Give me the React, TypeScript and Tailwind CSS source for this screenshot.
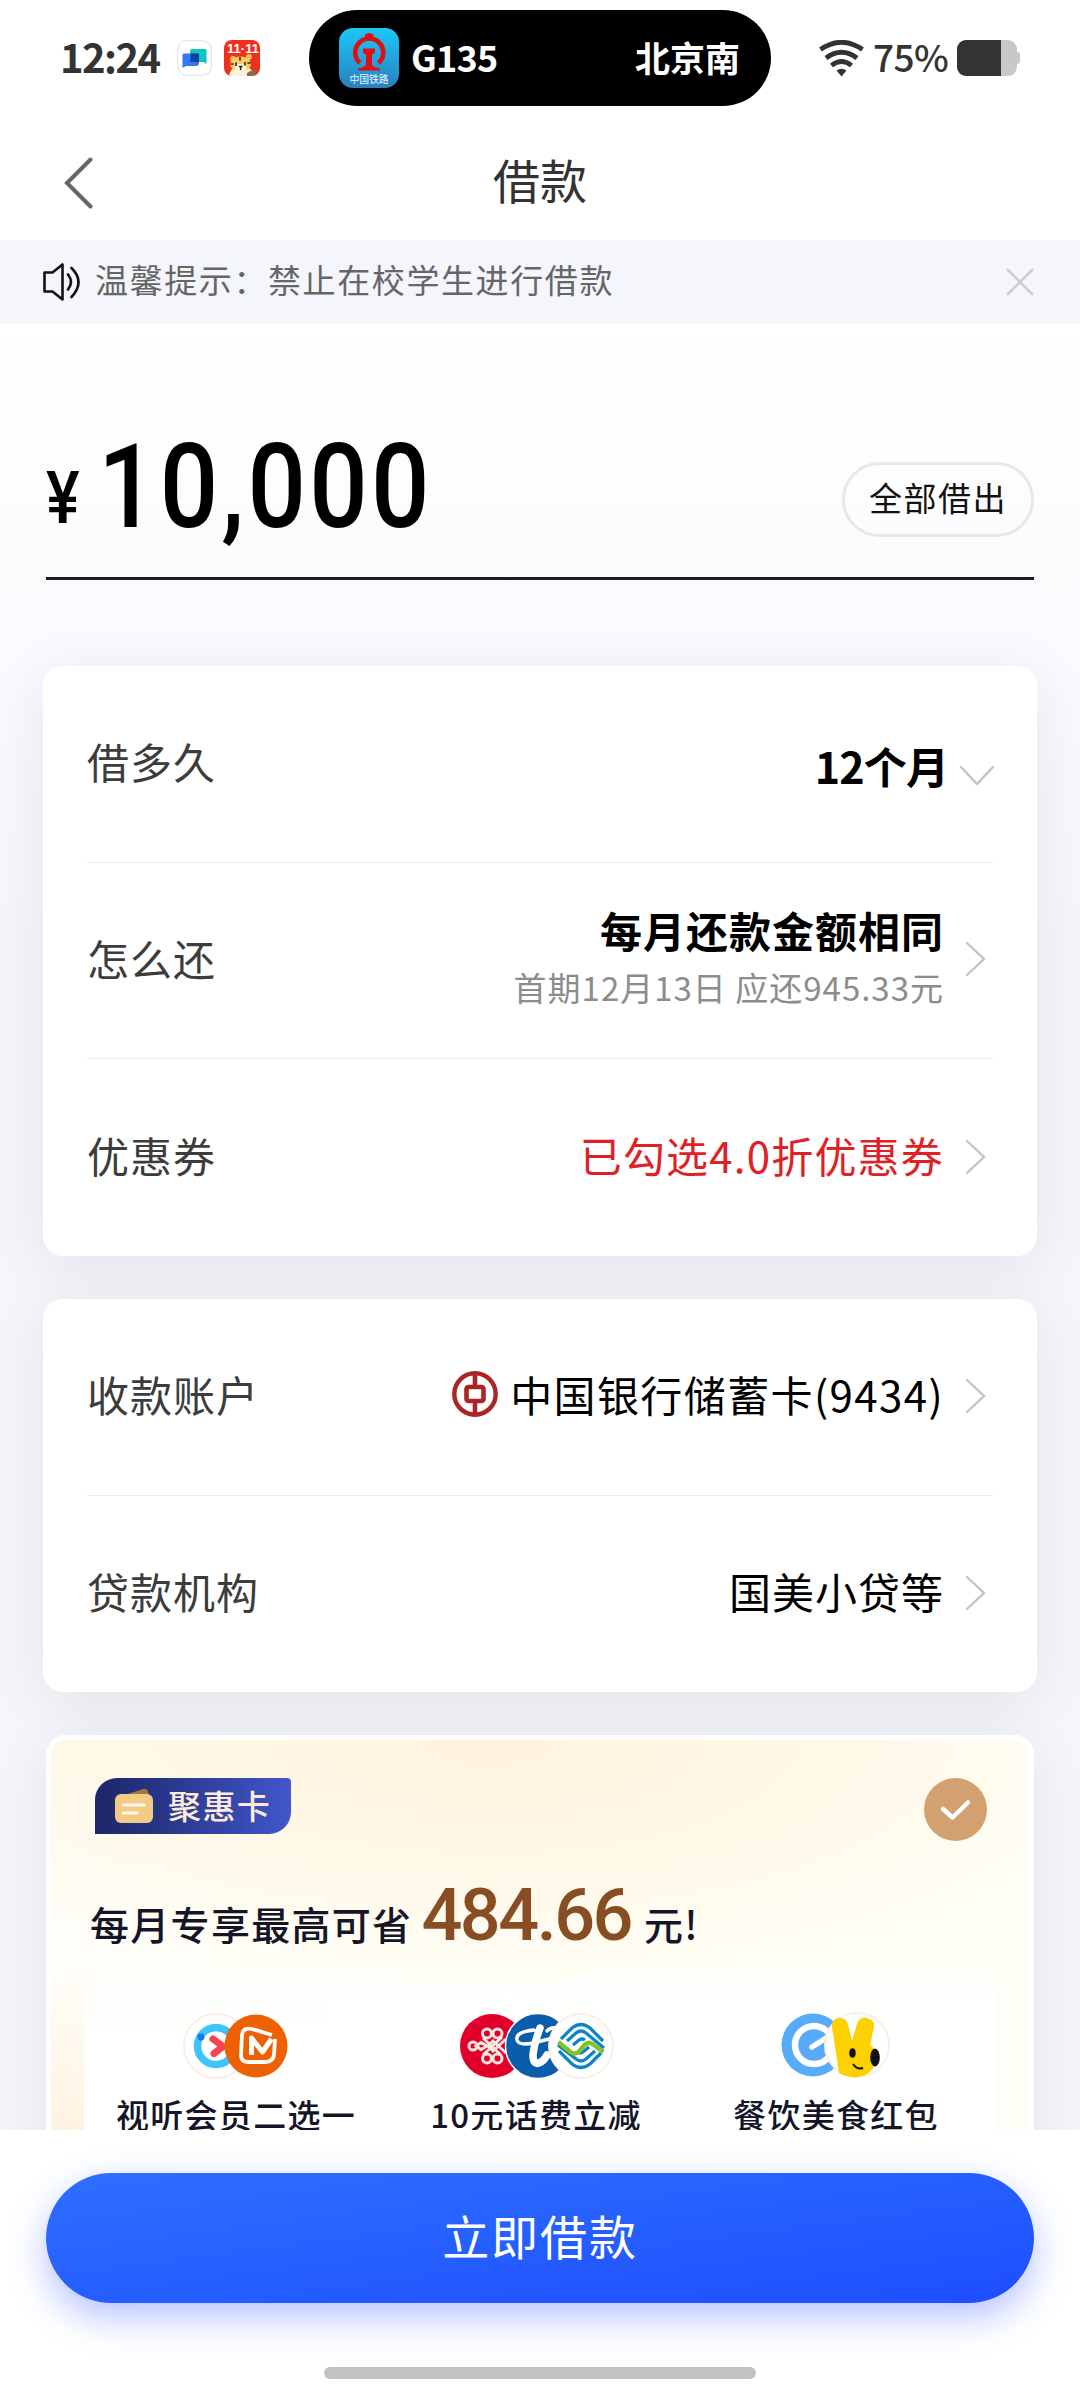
import React from "react";

type RowProps = {
  label: string;
  last?: boolean;
  children: React.ReactNode;
};

const Chevron = () => (
  <svg className="ml-[21px] mr-px h-[36px] w-[22px] shrink-0" viewBox="0 0 22 36" fill="none" aria-hidden>
    <path d="M2 2L19 18L2 34" stroke="#c4c4c4" strokeWidth="2.4" strokeLinecap="round" />
  </svg>
);

const Row = ({ label, last, children }: RowProps) => (
  <div
    className={`flex h-[196.67px] items-center justify-between pr-[5px] ${
      last ? "" : "border-b-[1.5px] border-[#ececee]"
    }`}
  >
    <span className="pb-[5px] text-[42px] leading-none tracking-[1px] text-[#3c3c3c]">{label}</span>
    <div className="flex items-center pb-[2px]">{children}</div>
  </div>
);

const StatusBar = () => (
  <div className="relative flex h-[116px] items-center pl-[60px] text-[#333]">
    <span className="w-[117px] whitespace-nowrap pb-[4px] text-[40px] font-bold leading-none tracking-[-1.6px]">12:24</span>
    <div className="flex gap-3">
      <svg className="h-[36px] w-[35px]" viewBox="0 0 35 36" aria-hidden>
        <rect x=".7" y=".7" width="33.6" height="34.6" rx="9" fill="#fff" stroke="#e3e6e8" strokeWidth="1.2" />
        <path d="M15 9h13.5q1 0 1 1v14l-3-2H13V11q0-2 2-2z" fill="#10c4c0" />
        <path d="M6.5 13.5H22V23q0 3-3 3H9l-3.500 2V14.500z" fill="#2f7bf5" />
        <path d="M13.5 13.5H22V22h-8.500z" fill="#0a42a6" />
      </svg>
      <svg className="h-[36px] w-[36px]" viewBox="0 0 36 36" aria-hidden>
        <defs>
          <clipPath id="tiger"><rect width="36" height="36" rx="8" /></clipPath>
        </defs>
        <g clipPath="url(#tiger)">
          <rect width="36" height="36" fill="#f0301e" />
          <path d="M5 36q1-8 8-9h10q6 2 7 9z" fill="#fff2d8" />
          <circle cx="9" cy="19" r="3" fill="#f3c050" />
          <circle cx="25" cy="17" r="3" fill="#f3c050" />
          <ellipse cx="16.5" cy="24" rx="10.500" ry="7.500" fill="#f8ce62" />
          <ellipse cx="16.5" cy="28" rx="6" ry="4" fill="#fff6e2" />
          <path d="M12 23v2.500M21 22.500v2.500M15.500 26.500h2.500M16 17.500v2.500M7 24h2M24 23h2M16.700 27.500v2" stroke="#3a2316" strokeWidth="1.600" strokeLinecap="round" />
          <path d="M23 33q5-4 10-2l-3 5h-7z" fill="#8a6a48" />
          <text x="19" y="13" textAnchor="middle" fontSize="13" fontWeight="700" fill="#fff" fontFamily="Liberation Sans, sans-serif">11·11</text>
        </g>
      </svg>
    </div>
    <div className="absolute left-[309px] top-[10px] flex h-[96px] w-[462px] items-center rounded-full bg-black pl-[30px] pr-[31px] text-white">
      <svg className="h-[60px] w-[60px]" viewBox="0 0 60 60" aria-hidden>
        <defs>
          <linearGradient id="rail" x1="0" y1="0" x2="0" y2="1">
            <stop offset="0" stopColor="#1cc8f8" />
            <stop offset="1" stopColor="#2b80bd" />
          </linearGradient>
        </defs>
        <rect width="60" height="60" rx="14" fill="url(#rail)" />
        <path d="M21 35A14 14 0 1 1 39.500 35" fill="none" stroke="#dd1014" strokeWidth="4.600" />
        <path d="M26 6.500q4-3 8.500 0v3H26zM24 20.500h12v4.500l-3 1.500v10q0 2.500 8 4v2H19v-2q8-1.500 8-4v-10L24 25z" fill="#dd1014" />
        <text x="30" y="54.500" textAnchor="middle" fontSize="9.800" fill="#e8f6ff" fontFamily="Noto Sans CJK SC, sans-serif">中国铁路</text>
      </svg>
      <span className="ml-[12px] pb-[4px] text-[36px] font-bold leading-none tracking-[-0.8px]">G135</span>
      <span className="ml-auto pb-[4px] text-[35px] font-bold leading-none">北京南</span>
    </div>
    <div className="ml-auto mr-[60px] flex items-center">
      <svg className="h-[37px] w-[45px]" viewBox="0 0 45 37" fill="none" aria-hidden>
        <path d="M1.500 9.500Q22.500-5 43.500 9.500M7 18Q22.500 6.500 38 18M12.500 25.500Q22.500 17.500 32.500 25.500" stroke="#333" strokeWidth="4.800" />
        <path d="M17.500 30.500q5-3.500 10 0l-5 6z" fill="#333" />
      </svg>
      <span className="ml-[9px] w-[84px] whitespace-nowrap pb-[4px] text-[37px] font-medium leading-none tracking-[-0.6px]">75%</span>
      <div className="flex items-center">
        <div className="flex h-[36px] w-[60px] overflow-hidden rounded-[9px] bg-[#c8c8c8]">
          <div className="w-[44px] bg-[#333]" />
        </div>
        <div className="h-[12px] w-[3px] rounded-r bg-[#c8c8c8]" />
      </div>
    </div>
  </div>
);

const BankLogo = () => (
  <svg className="mb-[3px] mr-[12px] h-[46px] w-[46px]" viewBox="0 0 46 46" fill="none" stroke="#ab2524" aria-hidden>
    <circle cx="23" cy="23" r="20.700" strokeWidth="4.400" />
    <rect x="14.500" y="16" width="17" height="14" rx="2" strokeWidth="4.600" />
    <path d="M23 3v13M23 30v13" strokeWidth="4.600" />
  </svg>
);

const VideoLogos = () => (
  <svg className="h-[76px] w-[114px]" viewBox="0 0 114 76" aria-hidden>
    <circle cx="37" cy="38" r="32" fill="#fff" stroke="#fdeee2" strokeWidth="2" />
    <circle cx="37" cy="38" r="18.500" fill="none" stroke="#3fc4f8" strokeWidth="7.500" />
    <circle cx="22" cy="29" r="3.500" fill="#1678f0" />
    <path d="M34 31l10 7.500-9 7" fill="none" stroke="#f8424e" strokeWidth="7" strokeLinecap="round" />
    <circle cx="77" cy="38" r="31.500" fill="#ee6002" />
    <g fill="none" stroke="#fff" strokeLinejoin="round">
      <path d="M93 27L73 21q-9-2-10 6l-1 20q0 7 7 7h18q8-1 8-8l1-15" strokeWidth="3.800" />
      <path d="M72.500 47V30l11 14 9-13" strokeWidth="5" />
    </g>
  </svg>
);

const TelecomLogos = () => (
  <svg className="h-[76px] w-[164px]" viewBox="0 0 164 76" aria-hidden>
    <circle cx="38" cy="38" r="32" fill="#e2002b" />
    <g fill="none" stroke="#fde7df" strokeWidth="3">
      <path d="M22 38l5-3.500 6 3.500-6 3.500zM29 30l18 17M48 29L29 47M34 38l5-5 13 12M34 38l5 5 13-12" />
      <circle cx="33" cy="25.500" r="4.500" />
      <circle cx="43.500" cy="25.500" r="4.500" />
      <circle cx="19" cy="38" r="4" />
      <circle cx="33" cy="50.500" r="4.500" />
      <circle cx="43.500" cy="50.500" r="4.500" />
    </g>
    <circle cx="84" cy="38" r="32.500" fill="#0a5dab" stroke="#fff" strokeWidth="1.500" />
    <g fill="none" stroke="#fff" strokeLinecap="round">
      <path d="M80 22Q61 24 63 32q2 6 16 3l20-5M93 23q4-4 8-3" strokeWidth="3.400" />
      <path d="M86 20q-6 16-7 27 0 10 6 8 5-2 8-8" strokeWidth="7.500" />
    </g>
    <circle cx="127" cy="38" r="32" fill="#fff" stroke="#fdeee2" strokeWidth="2" />
    <g fill="none" stroke="#0b84c8" strokeWidth="3.200">
      <path d="M107 31l11-11q9-7 18 0l13 13M113 33l9-8q5-4 10 0l18 15M119 37l6-5q3-2 6 0" />
      <path d="M147 45l-11 11q-9 7-18 0l-13-13M141 43l-9 8q-5 4-10 0L104 37M135 39l-6 5q-3 2-6 0" />
    </g>
    <path d="M104.500 34l12 10q4 3 8 0l6-7q4-4 8-1l11 8" fill="none" stroke="#84c225" strokeWidth="4.400" />
  </svg>
);

const FoodLogos = () => (
  <svg className="h-[76px] w-[120px]" viewBox="0 0 120 76" aria-hidden>
    <circle cx="37" cy="37" r="31.500" fill="#57abf8" />
    <circle cx="38" cy="37" r="19" fill="none" stroke="#fff" strokeWidth="6.500" />
    <path d="M36 39l22-14" stroke="#fff" strokeWidth="5.500" strokeLinecap="round" />
    <path d="M47 35l12-2v9l-10 1z" fill="#57abf8" />
    <circle cx="81" cy="37" r="32" fill="#fff" stroke="#fdeee2" strokeWidth="2" />
    <path d="M56 19q-1-7 6-9 8-1 10 6l4 17 5-17q3-8 10-6 8 2 7 9l-4 18q9 6 6 17-5 14-19 15-10 1-18-4z" fill="#fdd000" />
    <ellipse cx="76.500" cy="45" rx="3.200" ry="4.800" fill="#111" />
    <ellipse cx="99" cy="49.500" rx="4.800" ry="9" fill="#111" />
    <path d="M77 56q4 6 10 4" fill="none" stroke="#111" strokeWidth="2" />
  </svg>
);

const benefits = [
  { title: "视听会员二选一", logos: <VideoLogos /> },
  { title: "10元话费立减", logos: <TelecomLogos /> },
  { title: "餐饮美食红包", logos: <FoodLogos /> },
];

const App = () => (
  <div className="flex h-[2400px] w-[1080px] flex-col overflow-hidden bg-white font-['Noto_Sans_CJK_SC',sans-serif] text-black">
    <header className="h-[240px] shrink-0 bg-white">
      <StatusBar />
      <div className="relative flex h-[132px] items-center justify-center">
        <svg className="absolute left-[64px] top-[41px] h-[52px] w-[30px]" viewBox="0 0 30 52" fill="none" aria-hidden>
          <path d="M26.500 2.500L3 26L26.500 49.500" stroke="#666" strokeWidth="4" strokeLinecap="round" />
        </svg>
        <h1 className="pb-[7px] text-[47px] leading-none text-[#333]">借款</h1>
      </div>
    </header>

    <div className="flex h-[84px] shrink-0 items-center bg-[#f5f6fc] pl-[42px] pr-[46px]">
      <svg className="h-[40px] w-[40px]" viewBox="0 0 40 40" fill="none" stroke="#111" strokeWidth="2.600" strokeLinejoin="round" aria-hidden>
        <path d="M2.500 10.500h8L20.500 2.500v35L10.500 29.500h-8z" />
        <path d="M26 12.500q6 7.500 0 15M29.500 6q14 14 0 29" strokeLinecap="round" />
      </svg>
      <span className="ml-[13px] pb-[5px] text-[33px] leading-none tracking-[1.600px] text-[#666]">温馨提示：禁止在校学生进行借款</span>
      <svg className="ml-auto h-[28px] w-[28px]" viewBox="0 0 28 28" aria-hidden>
        <path d="M2 2L26 26M26 2L2 26" stroke="#ccc" strokeWidth="2.600" strokeLinecap="round" />
      </svg>
    </div>

    <main className="h-[1806px] shrink-0 overflow-hidden bg-gradient-to-b from-white via-[#f4f6fc] via-35% to-[#f4f6fc]">
      <div className="mx-[46px] flex h-[256px] items-end justify-between border-b-[3px] border-[#1f1d22]">
        <div className="flex items-end font-['Roboto',sans-serif] font-medium">
          <span className="mb-[42px] w-[52px] origin-left scale-x-[0.88] text-[72px] leading-none">¥</span>
          <span className="mb-[31px] origin-left scale-x-[0.88] text-[117px] leading-none tracking-[3.600px]">10,000</span>
        </div>
        <button className="mb-[40px] h-[75px] w-[192px] rounded-full border-[3px] border-[#e8e8e8] pb-[4px] text-[33px] leading-none tracking-[1.500px] text-[#111]">
          全部借出
        </button>
      </div>

      <section className="mx-[43px] mt-[86px] rounded-[20px] bg-white px-[44px] shadow-[0_10px_60px_rgba(0,0,0,0.08)]">
        <Row label="借多久">
          <span className="pt-[6px] text-[43px] font-bold leading-none tracking-[-0.9px]">12个月</span>
          <svg className="-mr-[7px] ml-[11px] mt-[26px] h-[22px] w-[36px]" viewBox="0 0 36 22" fill="none" aria-hidden>
            <path d="M2 2L18 19L34 2" stroke="#c4c4c4" strokeWidth="2.400" strokeLinecap="round" />
          </svg>
        </Row>
        <Row label="怎么还">
          <div className="text-right leading-none">
            <p className="text-[42px] font-bold leading-[56px] tracking-[1px]">每月还款金额相同</p>
            <p className="text-[33px] leading-[58px] tracking-[1px] text-[#8c8c8c]">首期12月13日 应还945.33元</p>
          </div>
          <Chevron />
        </Row>
        <Row label="优惠券" last>
          <span className="pb-[3px] text-[42px] leading-none tracking-[1.200px] text-[#e02024]">已勾选4.0折优惠券</span>
          <Chevron />
        </Row>
      </section>

      <section className="mx-[43px] mt-[43px] rounded-[20px] bg-white px-[44px] shadow-[0_10px_60px_rgba(0,0,0,0.08)]">
        <Row label="收款账户">
          <BankLogo />
          <span className="pb-[3px] text-[42px] leading-none tracking-[1.400px]">中国银行储蓄卡(9434)</span>
          <Chevron />
        </Row>
        <Row label="贷款机构" last>
          <span className="pb-[3px] text-[42px] leading-none tracking-[1px]">国美小贷等</span>
          <Chevron />
        </Row>
      </section>

      <section className="mx-[46px] mt-[43px] h-[500px] rounded-[20px] border-[5px] border-white bg-[radial-gradient(ellipse_68%_50%_at_45%_0%,#fff4de_0%,#fff5e2_30%,rgba(255,253,246,0)_100%),linear-gradient(90deg,rgba(255,240,222,0)_0%,#fffef6_30%),linear-gradient(180deg,#fffbf0_0%,#fffef9_45%,#fff1e0_82%)] px-[33px] shadow-[0_10px_60px_rgba(0,0,0,0.08)]">
        <div className="flex items-start justify-between pl-[11px] pr-[9px] pt-[38px]">
          <div className="flex h-[56px] w-[196px] items-center rounded-br-[22px] rounded-tl-[22px] rounded-tr-[4px] bg-gradient-to-r from-[#1c2668] to-[#4257cc] pl-[20px]">
            <svg className="h-[36px] w-[38px]" viewBox="0 0 38 36" aria-hidden>
              <path d="M4 9L28 1q4-1 5 3l2 8z" fill="#a07838" />
              <rect y="6" width="38" height="29" rx="6" fill="#f2cb85" />
              <path d="M8 17h21M8 25h14" stroke="#fff8ea" strokeWidth="3" strokeLinecap="round" />
            </svg>
            <span className="ml-[15px] pb-[1px] text-[33px] font-medium leading-none tracking-[1.400px] text-[#fcebdc]">聚惠卡</span>
          </div>
          <svg className="h-[63px] w-[63px]" viewBox="0 0 63 63" fill="none" aria-hidden>
            <circle cx="31.500" cy="31.500" r="31.500" fill="#d3a070" />
            <path d="M19 31l9.500 8.500L44 24.500" stroke="#fff" strokeWidth="4.500" strokeLinecap="round" strokeLinejoin="round" />
          </svg>
        </div>
        <p className="mt-[30px] flex h-[88px] items-baseline pl-[6px] text-[39px] font-medium tracking-[1.300px] text-[#15152a]">
          每月专享最高可省
          <span className="ml-[9px] font-['Roboto'] text-[72px] leading-[90px] tracking-[-2.500px] text-[#884d22]">484.66</span>
          <span className="ml-[13px]">元!</span>
        </p>
        <div className="mt-[20px] flex h-[300px] w-[912px] rounded-[16px] bg-gradient-to-b from-white/70 to-white to-20% pl-[2px] pt-[29px]">
          {benefits.map((item) => (
            <div key={item.title} className="flex w-[300px] flex-col items-center">
              {item.logos}
              <span className="mt-[14px] whitespace-nowrap text-[33px] font-medium leading-none tracking-[1.300px] text-[#15152a]">
                {item.title}
              </span>
            </div>
          ))}
        </div>
      </section>
    </main>

    <footer className="flex h-[270px] shrink-0 flex-col items-center bg-white pt-[43px]">
      <button className="h-[130px] w-[988px] rounded-full bg-gradient-to-br from-[#2f6eff] to-[#1f4dff] pb-[7px] text-[47px] leading-none tracking-[1.900px] text-white shadow-[0_14px_36px_rgba(40,80,255,0.35)]">
        立即借款
      </button>
      <div className="mt-[64px] h-[12px] w-[432px] rounded-full bg-[#c2c2c2]" />
    </footer>
  </div>
);

export default App;
